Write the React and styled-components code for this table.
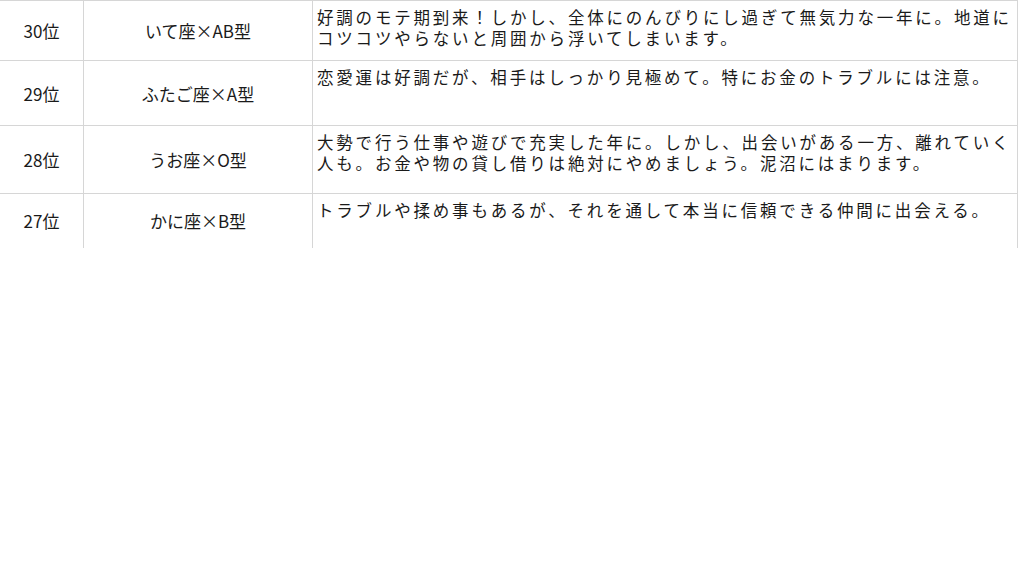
import styled, { createGlobalStyle } from 'styled-components';

const GlobalStyle = createGlobalStyle`
  html, body {
    margin: 0;
    padding: 0;
    background: #ffffff;
  }
  body {
    font-family: "Noto Sans CJK JP", "Noto Sans", sans-serif;
    color: #1a1a1a;
  }
`;

const Sheet = styled.table`
  border-collapse: collapse;
  table-layout: fixed;
  width: 1018px;
  margin-left: -1px;
`;

const Col = styled.col`
  width: ${(p) => p.$w}px;
`;

const Row = styled.tr`
  height: ${(p) => p.$h}px;
`;

const Cell = styled.td`
  border: 1px solid #d6d6d6;
  padding: 0;
  font-size: 17px;
  text-align: center;
  vertical-align: middle;
  white-space: nowrap;
  ${(p) => p.$last && 'border-bottom: none;'}
`;

const Comment = styled(Cell)`
  text-align: left;
  vertical-align: top;
  padding: 6px 0 0 4px;
  font-size: 16.5px;
  line-height: 21px;
  letter-spacing: 2.8px;
`;

const Line = styled.div`
  height: 21px;
`;

const rows = [
  {
    rank: '30位',
    sign: 'いて座×AB型',
    h: 60,
    text: [
      '好調のモテ期到来！しかし、全体にのんびりにし過ぎて無気力な一年に。地道に',
      'コツコツやらないと周囲から浮いてしまいます。',
    ],
  },
  {
    rank: '29位',
    sign: 'ふたご座×A型',
    h: 65,
    text: ['恋愛運は好調だが、相手はしっかり見極めて。特にお金のトラブルには注意。'],
  },
  {
    rank: '28位',
    sign: 'うお座×O型',
    h: 68,
    text: [
      '大勢で行う仕事や遊びで充実した年に。しかし、出会いがある一方、離れていく',
      '人も。お金や物の貸し借りは絶対にやめましょう。泥沼にはまります。',
    ],
  },
  {
    rank: '27位',
    sign: 'かに座×B型',
    h: 54,
    text: ['トラブルや揉め事もあるが、それを通して本当に信頼できる仲間に出会える。'],
  },
];

const App = () => (
  <>
    <GlobalStyle />
    <Sheet>
      <colgroup>
        <Col $w={84} />
        <Col $w={229} />
        <Col $w={705} />
      </colgroup>
      <tbody>
        {rows.map((r, i) => {
          const last = i === rows.length - 1;
          return (
            <Row key={r.rank} $h={r.h}>
              <Cell $last={last}>{r.rank}</Cell>
              <Cell $last={last}>{r.sign}</Cell>
              <Comment $last={last}>
                {r.text.map((line) => (
                  <Line key={line}>{line}</Line>
                ))}
              </Comment>
            </Row>
          );
        })}
      </tbody>
    </Sheet>
  </>
);

export default App;
